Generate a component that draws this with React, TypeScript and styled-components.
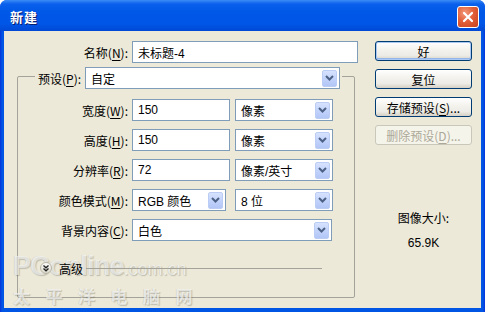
import React from "react";
import styled, { createGlobalStyle } from "styled-components";

const GlobalStyle = createGlobalStyle`
  html, body {
    margin: 0;
    padding: 0;
    background: #ffffff;
  }
  body {
    font-family: "Liberation Sans", "Noto Sans CJK SC", sans-serif;
    font-size: 12px;
    color: #000;
  }
`;

const Window = styled.div`
  position: relative;
  width: 485px;
  height: 312px;
  display: flex;
  flex-direction: column;
  background: linear-gradient(90deg, #0831d9 0, #0055e5 2px, #0055e5 483px, #0831d9 485px);
  border-radius: 7px 7px 0 0;
  overflow: hidden;
`;

const TitleBar = styled.div`
  height: 31px;
  flex: none;
  display: flex;
  align-items: center;
  justify-content: space-between;
  padding: 0 6px 0 10px;
  background: linear-gradient(
    180deg,
    #3b8cf5 0,
    #0a60ec 4px,
    #0058e8 12px,
    #0056e6 24px,
    #0048d4 31px
  );
`;

const Title = styled.div`
  color: #fff;
  font-family: "Noto Sans CJK SC", sans-serif;
  font-weight: 700;
  font-size: 13px;
  letter-spacing: 1px;
  text-shadow: 1px 1px 0 #0a1f6e;
  margin-top: 2px;
`;

const CloseBtn = styled.div`
  width: 20px;
  height: 20px;
  border: 1px solid #fff;
  border-radius: 3px;
  background: radial-gradient(circle at 35% 30%, #f29a7c 0, #e2603a 45%, #c8401c 100%);
  display: flex;
  align-items: center;
  justify-content: center;
  margin-top: 3px;
`;

const Body = styled.div`
  flex: 1;
  margin: 0 4px 4px;
  background: #ece9d8;
  display: flex;
  padding: 10px 0 0 13px;
`;

const LeftCol = styled.div`
  width: 341px;
  display: flex;
  flex-direction: column;
`;

const RightCol = styled.div`
  width: 97px;
  margin-left: 17px;
  display: flex;
  flex-direction: column;
  align-items: center;
`;

const Row = styled.div<{ $mt?: number }>`
  display: flex;
  align-items: center;
  height: 22px;
  margin-top: ${(p) => p.$mt ?? 0}px;
`;

const Label = styled.label<{ $w?: number }>`
  width: ${(p) => (p.$w ? `${p.$w}px` : "auto")};
  text-align: right;
  margin-right: 4px;
  font-family: "Noto Sans CJK SC", sans-serif;
  font-size: 12px;
  white-space: nowrap;
  u {
    text-underline-offset: 2px;
  }
`;

const TextBox = styled.div<{ $w: number }>`
  width: ${(p) => p.$w}px;
  height: 22px;
  box-sizing: border-box;
  border: 1px solid #7f9db9;
  background: #fff;
  display: flex;
  align-items: center;
  padding-left: 5px;
  font-family: "Liberation Sans", "Noto Sans CJK SC", sans-serif;
  font-size: 12px;
`;

const Select = styled(TextBox)<{ $ml?: number }>`
  justify-content: space-between;
  padding-right: 2px;
  margin-left: ${(p) => p.$ml ?? 0}px;
`;

const DropBtn = styled.div`
  width: 15px;
  height: 17px;
  box-sizing: border-box;
  border: 1px solid #bccdf5;
  border-radius: 2px;
  background: linear-gradient(180deg, #d7e2fd 0, #c2d3fb 50%, #b2c6f6 100%);
  display: flex;
  align-items: center;
  justify-content: center;
`;

const Group = styled.div`
  margin-top: 13px;
  width: 338px;
  height: 222px;
  box-sizing: border-box;
  border: 1px solid #a3a39a;
  border-radius: 2px;
  display: flex;
  flex-direction: column;
`;

const GroupHead = styled.div`
  display: flex;
  align-items: center;
  height: 22px;
  margin: -10px 0 0 17px;
  padding: 0 2px 0 3px;
  align-self: flex-start;
  background: #ece9d8;
`;

const AdvRow = styled.div`
  position: relative;
  z-index: 1;
  display: flex;
  align-items: center;
  height: 14px;
  margin-top: 20px;
  padding-left: 22px;
`;

const AdvText = styled.span`
  font-family: "Noto Sans CJK SC", sans-serif;
  font-size: 12px;
  margin: 0 3px 0 7px;
`;

const AdvLine = styled.div`
  width: 236px;
  height: 1px;
  background: #a3a39a;
`;

const Button = styled.div<{ $default?: boolean; $disabled?: boolean; $mt?: number }>`
  width: 97px;
  height: 20px;
  box-sizing: border-box;
  margin-top: ${(p) => p.$mt ?? 0}px;
  border: 1px solid ${(p) => (p.$disabled ? "#c9c7ba" : "#003c74")};
  border-radius: 3px;
  background: ${(p) =>
    p.$disabled
      ? "#f5f4ea"
      : "linear-gradient(180deg, #ffffff 0, #f4f3ee 40%, #ecebe5 75%, #d6d0c5 100%)"};
  box-shadow: ${(p) =>
    p.$default ? "inset 0 0 0 1px #aac8f2, inset 0 -1px 0 1px #93b5ea" : "none"};
  color: ${(p) => (p.$disabled ? "#aca899" : "#000")};
  display: flex;
  align-items: center;
  justify-content: center;
  font-family: "Noto Sans CJK SC", sans-serif;
  font-size: 12px;
  u {
    text-underline-offset: 2px;
  }
`;

const SizeLabel = styled.div<{ $mt: number }>`
  margin-top: ${(p) => p.$mt}px;
  font-family: "Noto Sans CJK SC", sans-serif;
  font-size: 12px;
  line-height: 14px;
`;

const SizeValue = styled.div`
  margin-top: 11px;
  font-family: "Liberation Sans", sans-serif;
  font-size: 12px;
  line-height: 14px;
`;

const Watermark = styled.div`
  position: absolute;
  left: 13px;
  top: 252px;
  width: 180px;
  pointer-events: none;
  color: rgba(255, 255, 255, 0.6);
  text-shadow: 1px 1px 1px rgba(90, 90, 80, 0.3), -1px 0 0 rgba(150, 150, 140, 0.2);
`;

const WmBrand = styled.div`
  font-family: "Liberation Sans", sans-serif;
  font-weight: 700;
  font-size: 27px;
  line-height: 29px;
  letter-spacing: -0.8px;
  white-space: nowrap;
  span {
    font-size: 18px;
    font-weight: 400;
    letter-spacing: 0;
  }
`;

const WmName = styled.div`
  font-family: "Noto Sans CJK SC", sans-serif;
  font-weight: 700;
  font-size: 17px;
  line-height: 20px;
  letter-spacing: 15.5px;
  margin-top: 2px;
  white-space: nowrap;
`;

const Chevron = () => (
  <svg width="9" height="6" viewBox="0 0 9 6">
    <path d="M1 1 L4.5 4.5 L8 1" fill="none" stroke="#4d6185" strokeWidth="2" />
  </svg>
);

const DropSelect = ({ w, ml, children }: { w: number; ml?: number; children: React.ReactNode }) => (
  <Select $w={w} $ml={ml}>
    <span>{children}</span>
    <DropBtn>
      <Chevron />
    </DropBtn>
  </Select>
);

const AdvIcon = () => (
  <svg width="12" height="12" viewBox="0 0 12 12">
    <defs>
      <linearGradient id="adv" x1="0" y1="0" x2="0" y2="1">
        <stop offset="0" stopColor="#ffffff" />
        <stop offset="1" stopColor="#d8d4c6" />
      </linearGradient>
    </defs>
    <circle cx="6" cy="6" r="5.5" fill="url(#adv)" stroke="#b8b5a6" />
    <path d="M3.5 3.5 L6 5.8 L8.5 3.5 M3.5 6.5 L6 8.8 L8.5 6.5" fill="none" stroke="#222" strokeWidth="1.3" />
  </svg>
);

export default function App() {
  return (
    <>
      <GlobalStyle />
      <Window>
        <TitleBar>
          <Title>新建</Title>
          <CloseBtn>
            <svg width="12" height="12" viewBox="0 0 12 12">
              <path d="M2 2 L10 10 M10 2 L2 10" stroke="#fff" strokeWidth="2.2" strokeLinecap="round" />
            </svg>
          </CloseBtn>
        </TitleBar>
        <Body>
          <LeftCol>
            <Row>
              <Label $w={111}>
                名称(<u>N</u>):
              </Label>
              <TextBox $w={226}>未标题-4</TextBox>
            </Row>
            <Group>
              <GroupHead>
                <Label>
                  预设(<u>P</u>):
                </Label>
                <DropSelect w={255}>自定</DropSelect>
              </GroupHead>
              <Row $mt={10}>
                <Label $w={110}>
                  宽度(<u>W</u>):
                </Label>
                <TextBox $w={98}>150</TextBox>
                <DropSelect w={98} ml={5}>像素</DropSelect>
              </Row>
              <Row $mt={8}>
                <Label $w={110}>
                  高度(<u>H</u>):
                </Label>
                <TextBox $w={98}>150</TextBox>
                <DropSelect w={98} ml={5}>像素</DropSelect>
              </Row>
              <Row $mt={8}>
                <Label $w={110}>
                  分辨率(<u>R</u>):
                </Label>
                <TextBox $w={98}>72</TextBox>
                <DropSelect w={98} ml={5}>像素/英寸</DropSelect>
              </Row>
              <Row $mt={8}>
                <Label $w={110}>
                  颜色模式(<u>M</u>):
                </Label>
                <DropSelect w={94}>RGB 颜色</DropSelect>
                <DropSelect w={98} ml={9}>8 位</DropSelect>
              </Row>
              <Row $mt={8}>
                <Label $w={110}>
                  背景内容(<u>C</u>):
                </Label>
                <DropSelect w={200}>白色</DropSelect>
              </Row>
              <AdvRow>
                <AdvIcon />
                <AdvText>高级</AdvText>
                <AdvLine />
              </AdvRow>
            </Group>
          </LeftCol>
          <RightCol>
            <Button $default>好</Button>
            <Button $mt={8}>复位</Button>
            <Button $mt={8}>
              存储预设(<u>S</u>)...
            </Button>
            <Button $mt={8} $disabled>
              删除预设(<u>D</u>)...
            </Button>
            <SizeLabel $mt={66}>图像大小:</SizeLabel>
            <SizeValue>65.9K</SizeValue>
          </RightCol>
        </Body>
        <Watermark>
          <WmBrand>
            PConline<span>.com.cn</span>
          </WmBrand>
          <WmName>太平洋电脑网</WmName>
        </Watermark>
      </Window>
    </>
  );
}
